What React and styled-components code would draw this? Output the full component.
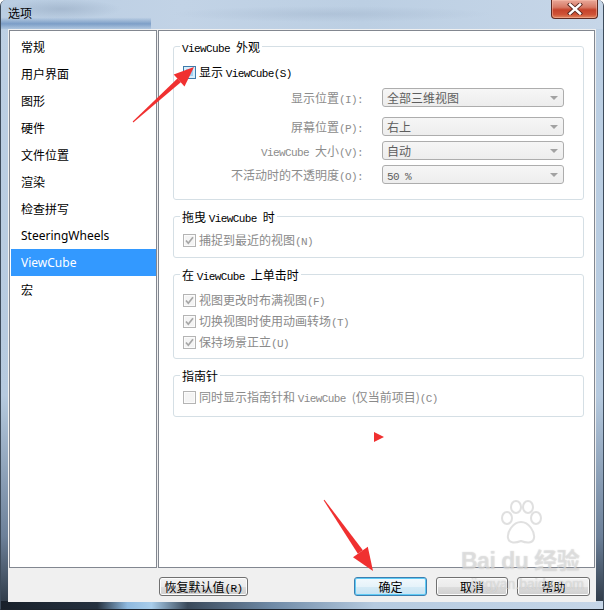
import React from "react";
import styled, { createGlobalStyle } from "styled-components";

const Global = createGlobalStyle`
  html, body { margin: 0; padding: 0; background: #ffffff; }
  body { font-family: "Noto Sans CJK SC", "Noto Sans", sans-serif; font-size: 12px; }
  * { box-sizing: border-box; }
`;

const Window = styled.div`
  position: relative;
  width: 604px;
  height: 610px;
  display: flex;
  flex-direction: column;
  padding: 0 7px 7px 7px;
  border-left: 1px solid #3d4b5b;
  border-right: 1px solid #3d4b5b;
  border-bottom: 1px solid #1c232c;
  border-radius: 6px 6px 0 0;
  overflow: hidden;
  background:
    linear-gradient(90deg, #18202a 0%, #25313f 16%, #8fb9de 21%, #a9cdea 25%, #3a495a 31%, #6f8aa6 45%, #b6cbe0 62%, #c6d6e8 100%) bottom / 100% 8px no-repeat,
    linear-gradient(180deg, #bdd0e4 0%, #b6cadf 65%, #6d819a 88%, #2a3541 100%);
`;

const TitleBar = styled.div`
  height: 29px;
  display: flex;
  align-items: flex-start;
  margin: 0 -7px;
  padding: 0 6px 0 7px;
  background:
    linear-gradient(180deg, rgba(255,255,255,0) 60%, rgba(72,118,176,0.55) 82%, rgba(120,160,205,0.2) 100%) 0 0 / 150px 100% no-repeat,
    radial-gradient(ellipse 60px 10px at 60px 9px, rgba(140,160,185,0.45), rgba(140,160,185,0) 100%),
    radial-gradient(ellipse 160px 8px at 330px 14px, rgba(150,170,195,0.35), rgba(150,170,195,0) 100%),
    linear-gradient(90deg, #b9cde2 0%, #c2d3e6 30%, #bccfe3 60%, #c6d6e8 100%);
`;

const Title = styled.span`
  margin-top: 5px;
  font-size: 12px;
  line-height: 16px;
  color: #000;
`;

const CloseButton = styled.div`
  margin-left: auto;
  margin-right: -1px;
  width: 47px;
  height: 19px;
  display: flex;
  align-items: center;
  justify-content: center;
  border: 1px solid #5e2a22;
  border-top: none;
  border-radius: 0 0 4px 4px;
  background: linear-gradient(180deg, #e9a899 0%, #d77a66 40%, #c5432b 55%, #cf5236 80%, #e0865f 100%);
  box-shadow: inset 0 0 0 1px rgba(255,200,180,0.45);
`;

const Client = styled.div`
  flex: 1;
  display: flex;
  flex-direction: column;
  background: #f0f0f0;
  padding: 1px 1px 0 1px;
`;

const Main = styled.div`
  height: 538px;
  display: flex;
  gap: 1px;
`;

const NavList = styled.div`
  width: 148px;
  background: #fff;
  border: 1px solid #828790;
  padding-top: 2px;
  display: flex;
  flex-direction: column;
`;

const NavItem = styled.div`
  height: 27px;
  margin-left: 1px;
  padding-left: 10px;
  display: flex;
  align-items: center;
  font-family: "Noto Sans", "Noto Sans CJK SC", sans-serif;
  font-size: 12px;
  color: ${(p) => (p.$selected ? "#ffffff" : "#000000")};
  background: ${(p) => (p.$selected ? "#3399ff" : "transparent")};
`;

const Panel = styled.div`
  flex: 1;
  background: #fff;
  border: 1px solid #828790;
  padding: 8px 10px 0 14px;
  display: flex;
  flex-direction: column;
  gap: ${(p) => p.$gap}px;
`;

const Group = styled.fieldset`
  margin: 0;
  min-width: 0;
  border: 1px solid #d5dfe5;
  border-radius: 3px;
  padding: 0 19px ${(p) => p.$bottom ?? 9}px 9px;
`;

const Legend = styled.legend`
  height: 15px;
  margin-left: -3px;
  padding: 0 2px;
  white-space: pre;
  font-size: 12px;
  line-height: 15px;
  color: #000;
`;

const Mono = styled.span`
  font-family: "Liberation Mono", "DejaVu Sans Mono", monospace;
  font-size: 11px;
  letter-spacing: -0.6px;
`;

const GroupBody = styled.div`
  margin-top: ${(p) => p.$top ?? 8}px;
  display: flex;
  flex-direction: column;
  gap: 5px;
`;

const CheckRow = styled.div`
  height: 16px;
  display: flex;
  align-items: center;
  gap: 3px;
  font-size: 12px;
  color: ${(p) => (p.$disabled ? "#8a8a8a" : "#000")};
`;

const RowText = styled.span`
  display: block;
  height: 16px;
  line-height: 16px;
  white-space: pre;
`;

const Box = styled.span`
  width: 13px;
  height: 13px;
  flex: none;
  display: flex;
  align-items: center;
  justify-content: center;
  border: 1px solid ${(p) => (p.$active ? "#3d7bab" : "#b4b4b4")};
  background: ${(p) => (p.$active ? "#9fd0f2" : "#f4f4f4")};
  box-shadow: ${(p) => (p.$active ? "inset 0 0 0 2px #d8eefc" : "inset 0 0 0 1px #fbfbfb")};
`;

const FormGrid = styled.div`
  margin-top: 8px;
  display: grid;
  grid-template-columns: 1fr 182px;
  grid-template-rows: 24px 19px 19px 19px;
  column-gap: 19px;
  row-gap: 5px;
`;

const FieldLabel = styled.div`
  height: 19px;
  text-align: right;
  white-space: pre;
  font-size: 12px;
  line-height: 19px;
  color: #8c8c8c;
`;

const Select = styled.div`
  height: 19px;
  display: flex;
  align-items: center;
  padding: 0 5px 0 4px;
  border: 1px solid #adadad;
  border-radius: 3px;
  background: linear-gradient(180deg, #f6f6f6, #ededed);
  font-size: 12px;
  color: #5e5e5e;
`;

const Arrow = styled.span`
  margin-left: auto;
  width: 0;
  height: 0;
  border-left: 4px solid transparent;
  border-right: 4px solid transparent;
  border-top: 4px solid #a2a2a2;
`;

const Footer = styled.div`
  flex: 1;
  display: flex;
  align-items: flex-start;
  padding: 9px 5px 0 150px;
  gap: 9px;
`;

const Button = styled.div`
  width: ${(p) => p.$w}px;
  height: 19px;
  text-align: center;
  white-space: pre;
  font-size: 12px;
  line-height: 17px;
  color: #000;
  border: 1px solid ${(p) => (p.$primary ? "#3c7fb1" : "#707070")};
  border-radius: 3px;
  background: ${(p) =>
    p.$primary
      ? "linear-gradient(180deg, #f2f9fd 0%, #e6f3fa 50%, #d5ebf6 51%, #c7e3f3 100%)"
      : "linear-gradient(180deg, #f2f2f2 0%, #ebebeb 50%, #dddddd 51%, #cfcfcf 100%)"};
  box-shadow: ${(p) => (p.$primary ? "inset 0 0 0 1px #5fcbf5" : "inset 0 0 0 1px #fcfcfc")};
`;

const Spacer = styled.div`
  flex: 1;
`;

const Overlay = styled.svg`
  position: absolute;
  left: 0;
  top: 0;
  pointer-events: none;
`;

const Watermark = styled.div`
  position: absolute;
  left: 460px;
  top: 500px;
  width: 140px;
  display: flex;
  flex-direction: column;
  pointer-events: none;
  white-space: nowrap;
  color: rgba(240, 240, 240, 0.55);
  text-shadow: 0 0 1px rgba(140, 140, 140, 0.5);
  font-family: "Liberation Sans", "Noto Sans CJK SC", sans-serif;
`;

const WmPaw = styled.svg`
  margin-left: 38px;
  opacity: 0.55;
`;

const WmBrand = styled.div`
  margin-top: 2px;
  font-size: 23px;
  font-weight: bold;
  line-height: 26px;
  letter-spacing: -0.5px;
`;

const WmUrl = styled.div`
  margin-top: 2px;
  padding-left: 10px;
  font-size: 14px;
  line-height: 16px;
`;

function CheckBox({ checked, active }) {
  return (
    <Box $active={active}>
      {checked && (
        <svg width="11" height="11" viewBox="0 0 11 11">
          <path d="M2 5.5 L4.3 8.2 L9 2.2" fill="none" stroke="#a6a6a6" strokeWidth="1.7" />
        </svg>
      )}
    </Box>
  );
}

function Dropdown({ children }) {
  return (
    <Select>
      <RowText>{children}</RowText>
      <Arrow />
    </Select>
  );
}

const navItems = ["常规", "用户界面", "图形", "硬件", "文件位置", "渲染", "检查拼写", "SteeringWheels", "ViewCube", "宏"];

export default function App() {
  return (
    <>
      <Global />
      <Window>
        <TitleBar>
          <Title>选项</Title>
          <CloseButton>
            <svg width="16" height="12" viewBox="0 0 16 12">
              <path d="M3 1.5 L13 10.5 M13 1.5 L3 10.5" stroke="#5a2a22" strokeWidth="4.2" strokeLinecap="square" />
              <path d="M3 1.5 L13 10.5 M13 1.5 L3 10.5" stroke="#ffffff" strokeWidth="2.4" strokeLinecap="square" />
            </svg>
          </CloseButton>
        </TitleBar>
        <Client>
          <Main>
            <NavList>
              {navItems.map((n) => (
                <NavItem key={n} $selected={n === "ViewCube"}>{n}</NavItem>
              ))}
            </NavList>
            <Panel $gap={9}>
              <Group $bottom={15}>
                <Legend><Mono>ViewCube </Mono>外观</Legend>
                <GroupBody $top={10}>
                  <CheckRow>
                    <CheckBox active />
                    <RowText>显示 <Mono>ViewCube(S)</Mono></RowText>
                  </CheckRow>
                </GroupBody>
                <FormGrid>
                  <FieldLabel>显示位置<Mono>(I):</Mono></FieldLabel>
                  <Dropdown>全部三维视图</Dropdown>
                  <FieldLabel>屏幕位置<Mono>(P):</Mono></FieldLabel>
                  <Dropdown>右上</Dropdown>
                  <FieldLabel><Mono>ViewCube </Mono>大小<Mono>(V):</Mono></FieldLabel>
                  <Dropdown>自动</Dropdown>
                  <FieldLabel>不活动时的不透明度<Mono>(O):</Mono></FieldLabel>
                  <Dropdown><Mono>50 %</Mono></Dropdown>
                </FormGrid>
              </Group>
              <Group>
                <Legend>拖曳 <Mono>ViewCube </Mono>时</Legend>
                <GroupBody>
                  <CheckRow $disabled>
                    <CheckBox checked />
                    <RowText>捕捉到最近的视图<Mono>(N)</Mono></RowText>
                  </CheckRow>
                </GroupBody>
              </Group>
              <Group $bottom={8}>
                <Legend>在 <Mono>ViewCube </Mono>上单击时</Legend>
                <GroupBody $top={10}>
                  <CheckRow $disabled>
                    <CheckBox checked />
                    <RowText>视图更改时布满视图<Mono>(F)</Mono></RowText>
                  </CheckRow>
                  <CheckRow $disabled>
                    <CheckBox checked />
                    <RowText>切换视图时使用动画转场<Mono>(T)</Mono></RowText>
                  </CheckRow>
                  <CheckRow $disabled>
                    <CheckBox checked />
                    <RowText>保持场景正立<Mono>(U)</Mono></RowText>
                  </CheckRow>
                </GroupBody>
              </Group>
              <Group $bottom={11}>
                <Legend>指南针</Legend>
                <GroupBody $top={6}>
                  <CheckRow $disabled>
                    <CheckBox />
                    <RowText>同时显示指南针和 <Mono>ViewCube </Mono>(仅当前项目)<Mono>(C)</Mono></RowText>
                  </CheckRow>
                </GroupBody>
              </Group>
            </Panel>
          </Main>
          <Footer>
            <Button $w={89}>恢复默认值<Mono>(R)</Mono></Button>
            <Spacer />
            <Button $w={73} $primary>确定</Button>
            <Button $w={72}>取消</Button>
            <Button $w={73}>帮助</Button>
          </Footer>
        </Client>
        <Watermark>
          <WmPaw width="44" height="46" viewBox="0 0 44 46">
            <g fill="none" stroke="#c8c8c8" strokeWidth="2">
              <ellipse cx="8" cy="18" rx="5" ry="6" />
              <ellipse cx="17" cy="7" rx="5" ry="6" />
              <ellipse cx="29" cy="7" rx="5" ry="6" />
              <ellipse cx="37" cy="18" rx="5" ry="6" />
              <path d="M22 22 C14 22 8 32 9 38 C10 44 17 43 22 41 C27 43 34 44 35 38 C36 32 30 22 22 22 Z" />
            </g>
          </WmPaw>
          <WmBrand>Bai du 经验</WmBrand>
          <WmUrl>jingyan.baidu.com</WmUrl>
        </Watermark>
        <Overlay width="604" height="610" viewBox="0 0 604 610">
          <polygon points="132.3,122.4 179.8,82.3 176.4,78.5 131.7,121.6" fill="#f03030" />
          <polygon points="193,67 183.5,86.4 172.7,74.4" fill="#f03030" />
          <polygon points="322.6,500.3 356.9,553.7 361.9,550.3 323.4,499.7" fill="#f03030" />
          <polygon points="372,571 352,557.2 366.8,546.8" fill="#f03030" />
          <polygon points="373,432 383,437 373,442" fill="#f03030" />
        </Overlay>
      </Window>
    </>
  );
}
